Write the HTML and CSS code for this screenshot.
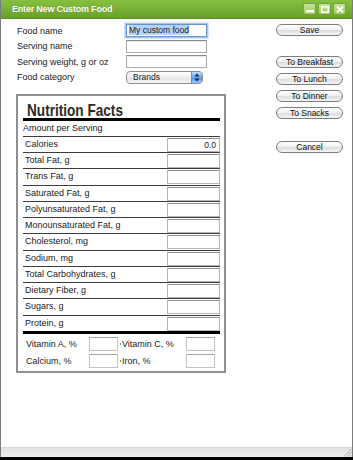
FILE: index.html
```html
<!DOCTYPE html>
<html lang="en">

<head>
    <meta charset="UTF-8" />
    <title>Enter New Custom Food</title>
    <link rel="stylesheet" href="styles.css">
</head>

<body>
    <div class="window">
        <!-- Title Bar -->
        <div class="titlebar">
            <span class="title">Enter New Custom Food</span>
            <div class="win-controls">
                <span class="wbtn"><svg width="8" height="7" viewBox="0 0 8 7"><rect x="0" y="4" width="8" height="2.5" fill="#fff"/></svg></span>
                <span class="wbtn"><svg width="8" height="7" viewBox="0 0 8 7"><rect x="0.75" y="0.75" width="6.5" height="5.5" fill="none" stroke="#fff" stroke-width="1.5"/></svg></span>
                <span class="wbtn"><svg width="8" height="7" viewBox="0 0 8 7"><path d="M1 0.5 L7 6.5 M7 0.5 L1 6.5" stroke="#fff" stroke-width="1.8"/></svg></span>
            </div>
        </div>

        <div class="content">
            <div class="main">
                <!-- Food Form -->
                <div class="form">
                    <label>Food name</label>
                    <div class="field focused"><span class="sel">My custom food</span></div>
                    <label>Serving name</label>
                    <div class="field"></div>
                    <label>Serving weight, g or oz</label>
                    <div class="field"></div>
                    <label>Food category</label>
                    <div class="select">
                        <span>Brands</span>
                        <span class="stepper">
                            <svg width="6" height="9" viewBox="0 0 6 9"><path d="M3 0.5 L5.5 3.5 L0.5 3.5 Z M3 8.5 L5.5 5.5 L0.5 5.5 Z" fill="#1a2a40"/></svg>
                        </span>
                    </div>
                </div>

                <!-- Nutrition Facts -->
                <div class="nutrition">
                    <div class="nf-title"><span>Nutrition Facts</span></div>
                    <div class="nf-bar"></div>
                    <div class="nf-amount">Amount per Serving</div>
                    <div class="nf-row"><span>Calories</span><div class="box">0.0</div></div>
                    <div class="nf-row"><span>Total Fat, g</span><div class="box"></div></div>
                    <div class="nf-row"><span>Trans Fat, g</span><div class="box"></div></div>
                    <div class="nf-row"><span>Saturated Fat, g</span><div class="box"></div></div>
                    <div class="nf-row"><span>Polyunsaturated Fat, g</span><div class="box"></div></div>
                    <div class="nf-row"><span>Monounsaturated Fat, g</span><div class="box"></div></div>
                    <div class="nf-row"><span>Cholesterol, mg</span><div class="box"></div></div>
                    <div class="nf-row"><span>Sodium, mg</span><div class="box"></div></div>
                    <div class="nf-row"><span>Total Carbohydrates, g</span><div class="box"></div></div>
                    <div class="nf-row"><span>Dietary Fiber, g</span><div class="box"></div></div>
                    <div class="nf-row"><span>Sugars, g</span><div class="box"></div></div>
                    <div class="nf-row"><span>Protein, g</span><div class="box"></div></div>
                    <div class="nf-bar"></div>
                    <div class="vitamins">
                        <span>Vitamin A, %</span><div class="vbox"></div><span class="dot"></span>
                        <span>Vitamin C, %</span><div class="vbox"></div>
                        <span>Calcium, %</span><div class="vbox"></div><span class="dot"></span>
                        <span>Iron, %</span><div class="vbox"></div>
                    </div>
                </div>
            </div>

            <!-- Actions -->
            <div class="actions">
                <button class="btn">Save</button>
                <button class="btn group">To Breakfast</button>
                <button class="btn">To Lunch</button>
                <button class="btn">To Dinner</button>
                <button class="btn">To Snacks</button>
                <button class="btn cancel">Cancel</button>
            </div>
        </div>

        <!-- Status Bar -->
        <div class="statusbar">
            <svg width="9" height="9" viewBox="0 0 9 9"><path d="M8.5 1 L1 8.5 M8.5 4 L4 8.5 M8.5 7 L7 8.5" stroke="#a8a8a8" stroke-width="1"/></svg>
        </div>
    </div>
</body>

</html>
```

FILE: styles.css
```css
/* === Base === */
* {
    margin: 0;
    padding: 0;
    box-sizing: border-box;
}

body {
    width: 353px;
    height: 460px;
    overflow: hidden;
    background-color: #000000;
    font-family: 'Liberation Sans', Arial, sans-serif;
    font-size: 9px;
    color: #1a1a1a;
}

.window {
    height: 457px;
    display: flex;
    flex-direction: column;
    background-color: #FFFFFF;
    border-left: 1px solid #7c7c7c;
    border-right: 1px solid #7c7c7c;
}

/* === Title Bar === */
.titlebar {
    height: 19px;
    display: flex;
    align-items: center;
    justify-content: space-between;
    padding: 0 6px 0 11px;
    background: linear-gradient(#86c041, #68a12a);
    border-bottom: 1px solid #5c9024;
}

.title {
    color: #FFFFFF;
    font-weight: bold;
    font-size: 9px;
    letter-spacing: -0.2px;
    text-shadow: 0 0 1px rgba(0, 0, 0, 0.25);
}

.win-controls {
    display: flex;
    gap: 2px;
}

.wbtn {
    width: 13px;
    height: 12px;
    display: flex;
    align-items: center;
    justify-content: center;
    border: 1px solid #76a63c;
    border-radius: 2px;
    background: linear-gradient(#c6e49a, #9ccb5e);
}

/* === Content === */
.content {
    flex: 1;
    display: flex;
    padding: 5px 0 0 15px;
}

.main {
    width: 210px;
}

.form {
    display: grid;
    grid-template-columns: 110px 81px;
    grid-template-rows: repeat(4, 13px);
    row-gap: 2.67px;
    align-items: center;
}

.form label {
    padding-left: 1px;
    font-size: 9px;
}

.field {
    height: 13px;
    padding: 0 2px;
    border: 1px solid #ababab;
    border-top-color: #8c8c8c;
    background-color: #FFFFFF;
    box-shadow: inset 0 1px 1px rgba(0, 0, 0, 0.1);
    font-size: 8.5px;
    line-height: 11px;
}

.field.focused {
    border-color: #6592d2;
    box-shadow: 0 0 0 1.5px #a9c8f0;
}

.sel {
    background-color: #b5d1f5;
}

.select {
    width: 77px;
    height: 13px;
    display: flex;
    align-items: center;
    justify-content: space-between;
    padding-left: 6px;
    overflow: hidden;
    border: 1px solid #8e8e8e;
    border-radius: 4px;
    background: linear-gradient(#ffffff, #efefef 50%, #e0e0e0 51%, #f6f6f6);
    font-size: 8.5px;
}

.stepper {
    width: 11px;
    height: 100%;
    display: flex;
    align-items: center;
    justify-content: center;
    border-left: 1px solid #6a8fc4;
    background: linear-gradient(#bcdafc, #6aa6f2 50%, #4a8ce9 51%, #9cc6f8);
}

/* === Nutrition Facts === */
.nutrition {
    height: 279px;
    margin-top: 10px;
    padding: 0 4px 0 5px;
    border: 2px solid #8f8f8f;
}

.nf-title {
    height: 22px;
    padding: 7px 0 0 4px;
    font-weight: bold;
    font-size: 17px;
    line-height: 15px;
    color: #2a2a2a;
}

.nf-title span {
    display: inline-block;
    transform: scaleX(0.8);
    transform-origin: left center;
}

.nf-bar {
    height: 3px;
    background-color: #000000;
}

.nf-amount {
    height: 15px;
    line-height: 15px;
}

.nf-row {
    height: 16.25px;
    display: flex;
    justify-content: space-between;
    align-items: flex-start;
    padding-left: 2px;
    border-top: 1px solid #3c3c3c;
    line-height: 15px;
}

.box {
    width: 53px;
    height: 14px;
    margin-top: 1px;
    padding-right: 3px;
    border: 1px solid #b4b4b4;
    border-top-color: #909090;
    text-align: right;
    font-size: 8.5px;
    line-height: 12px;
}

.vitamins {
    display: grid;
    grid-template-columns: 63px 29px 4px 64px 29px;
    grid-template-rows: 14px 14px;
    row-gap: 3px;
    align-items: center;
    padding: 3px 0 0 3px;
}

.vbox {
    height: 14px;
    border: 1px solid #c2c2c2;
    border-top-color: #a4a4a4;
}

.dot {
    width: 1px;
    height: 2px;
    margin-left: 2px;
    background-color: #8a8a8a;
}

/* === Buttons === */
.actions {
    width: 67px;
    margin-left: 50px;
    display: flex;
    flex-direction: column;
    gap: 5px;
}

.btn {
    height: 12px;
    border: 1px solid #7d7d7d;
    border-radius: 6px;
    background: linear-gradient(#ffffff, #f1f1f1 45%, #dedede 55%, #f5f5f5);
    font-family: 'Liberation Sans', Arial, sans-serif;
    font-size: 8.5px;
    line-height: 10px;
    color: #111111;
}

.btn.group {
    margin-top: 15px;
}

.btn.cancel {
    margin-top: 17px;
}

/* === Status Bar === */
.statusbar {
    height: 10px;
    display: flex;
    justify-content: flex-end;
    align-items: flex-end;
    border-top: 1px solid #d6d6d6;
    background: linear-gradient(#e2e2e2, #f0f0f0);
}
```
